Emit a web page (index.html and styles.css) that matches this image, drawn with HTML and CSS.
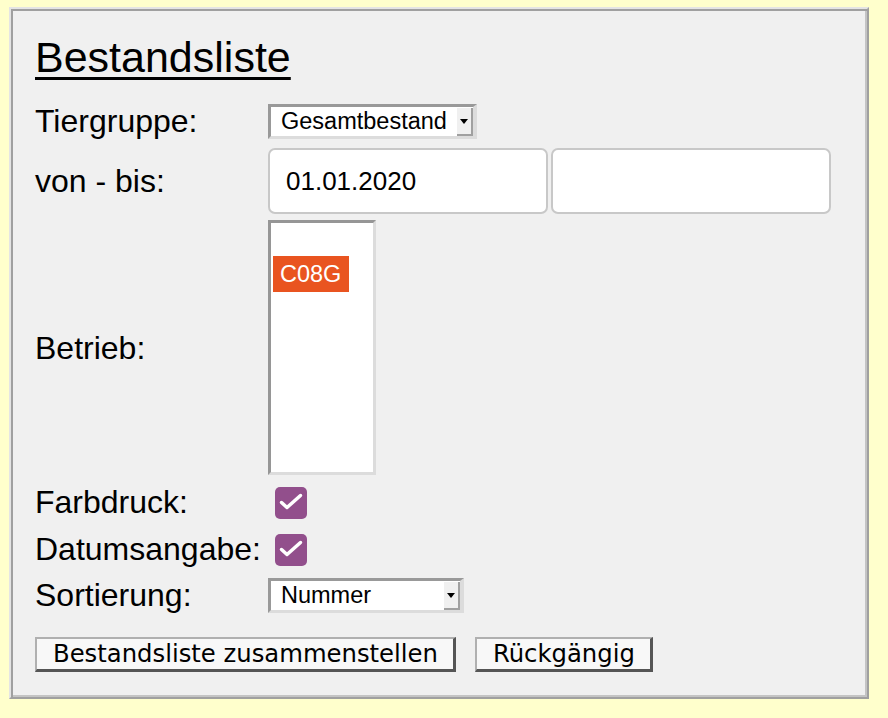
FILE: index.html
```html
<!DOCTYPE html>
<html lang="de">
<head>
<meta charset="utf-8">
<title>Bestandsliste</title>
<link rel="stylesheet" href="styles.css">
</head>
<body>
<div class="panel">
  <h1 class="title">Bestandsliste</h1>
  <div class="form">
    <label class="label">Tiergruppe:</label>
    <div class="field">
      <span class="select sel-group">
        <span class="select-text">Gesamtbestand</span>
        <span class="drop"><svg width="8" height="5" viewBox="0 0 8 5"><path d="M0 0H8L4 5Z" fill="#000"/></svg></span>
      </span>
    </div>

    <label class="label">von - bis:</label>
    <div class="field dates">
      <input class="date" type="text" value="01.01.2020">
      <input class="date" type="text" value="">
    </div>

    <label class="label">Betrieb:</label>
    <div class="field">
      <div class="listbox">
        <div class="option"></div>
        <div class="option selected">C08G</div>
      </div>
    </div>

    <label class="label check-label">Farbdruck:</label>
    <div class="field check-field">
      <span class="checkbox"><svg width="32" height="32" viewBox="0 0 32 32"><path d="M6.5 15.5 L12 20.5 L25.5 8.5" fill="none" stroke="#fff" stroke-width="3.5" stroke-linecap="round" stroke-linejoin="round"/></svg></span>
    </div>

    <label class="label check-label">Datumsangabe:</label>
    <div class="field check-field">
      <span class="checkbox"><svg width="32" height="32" viewBox="0 0 32 32"><path d="M6.5 15.5 L12 20.5 L25.5 8.5" fill="none" stroke="#fff" stroke-width="3.5" stroke-linecap="round" stroke-linejoin="round"/></svg></span>
    </div>

    <label class="label">Sortierung:</label>
    <div class="field">
      <span class="select sel-sort">
        <span class="select-text">Nummer</span>
        <span class="drop"><svg width="8" height="5" viewBox="0 0 8 5"><path d="M0 0H8L4 5Z" fill="#000"/></svg></span>
      </span>
    </div>
  </div>
  <div class="buttons">
    <button class="btn" type="button">Bestandsliste zusammenstellen</button>
    <button class="btn" type="button">Rückgängig</button>
  </div>
</div>
</body>
</html>
```
FILE: styles.css
```css
html, body {
  background: #ffffcc;
}
body {
  margin: 7px 9px;
  font-family: "Liberation Sans", Arial, sans-serif;
  color: #000;
}
.panel {
  box-sizing: border-box;
  width: 860px;
  height: 692px;
  background: #f0f0f0;
  border-style: solid;
  border-width: 2px;
  border-color: #e4e4e4 #a0a0a0 #a0a0a0 #e4e4e4;
  box-shadow: inset 2px 2px 0 #a0a0a0, inset -2px -2px 0 #c4c4c4;
  padding: 24px 24px 0 24px;
}
.title {
  margin: 0;
  font-size: 43px;
  font-weight: normal;
  line-height: 49px;
  text-decoration: underline;
  text-decoration-thickness: 3px;
  text-underline-offset: 5px;
}
.form {
  display: grid;
  grid-template-columns: 233px 1fr;
  row-gap: 8px;
  align-items: center;
  margin-top: 21px;
}
.label {
  font-size: 32px;
  line-height: 37px;
}
.check-label {
  line-height: 39px;
}
.field {
  display: flex;
  align-items: center;
}
.select {
  position: relative;
  box-sizing: border-box;
  height: 35px;
  display: flex;
  align-items: center;
  background: #fff;
  border-style: solid;
  border-width: 3px 4px 3px 3px;
  border-color: #999 #dcdcdc #dcdcdc #999;
  padding-left: 10px;
  font-size: 23.5px;
}
.sel-group { width: 209px; }
.sel-sort { width: 196px; }
.select-text {
  font-family: "Liberation Sans", Arial, sans-serif;
}
.drop {
  position: absolute;
  top: 1px;
  right: 0;
  bottom: 0;
  width: 16px;
  box-sizing: border-box;
  background: #f0f0f0;
  border-right: 2px solid #a0a0a0;
  border-bottom: 2px solid #a0a0a0;
  display: flex;
  align-items: center;
  justify-content: center;
}
.dates {
  gap: 3px;
}
.date {
  box-sizing: border-box;
  width: 280px;
  height: 66px;
  margin: 0;
  border: 2px solid #c8c8c8;
  border-radius: 7px;
  background: #fff;
  padding: 0 0 0 16px;
  font-family: "Liberation Sans", Arial, sans-serif;
  font-size: 26px;
  color: #000;
  outline: none;
}
.listbox {
  box-sizing: border-box;
  width: 108px;
  height: 255px;
  margin-top: -2px;
  background: #fff;
  border-style: solid;
  border-width: 3px;
  border-color: #969696 #dcdcdc #dcdcdc #969696;
  padding: 0 0 0 2px;
}
.option {
  height: 33px;
}
.option.selected {
  display: inline-block;
  height: 36px;
  line-height: 36px;
  padding: 0 8px 0 7px;
  background: #e95420;
  color: #fff;
  font-size: 23.5px;
}
.check-field {
  padding-left: 7px;
}
.checkbox {
  width: 32px;
  height: 32px;
  border-radius: 5px;
  background: #924f8c;
  display: flex;
  align-items: center;
  justify-content: center;
}
.buttons {
  display: flex;
  gap: 19px;
  margin-top: 23px;
}
.btn {
  box-sizing: border-box;
  height: 35px;
  margin: 0;
  padding: 0 15px 0 16px;
  background: #f8f8f8;
  border-style: solid;
  border-width: 2px 3px 3px 2px;
  border-color: #b0b0b0 #555 #555 #b0b0b0;
  font-family: "DejaVu Sans", sans-serif;
  font-size: 24.3px;
  line-height: 28px;
  color: #000;
}
```
